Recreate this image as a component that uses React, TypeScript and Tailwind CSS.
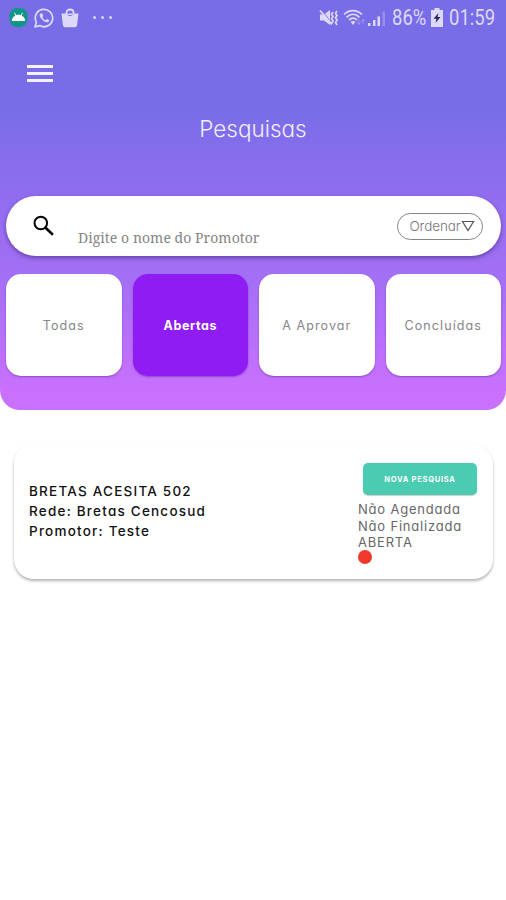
import React from "react";

const rounded = "font-['Inter','Open_Sans',sans-serif] [font-feature-settings:'cv11'] whitespace-nowrap";

function StatusBar() {
  return (
    <div className="flex h-9 items-center pb-px pl-[9px] pr-[9px] text-[#ddd9fb]">
      <svg className="h-[19px] w-[19px]" viewBox="0 0 19 20">
        <rect width="19" height="20" rx="8" fill="#0f9684" />
        <path d="M3 13.200c.2-3.500 2.800-5.700 6.500-5.700s6.300 2.200 6.500 5.700zM5.200 5l2 3.500M13.800 5l-2 3.500" fill="#fff" stroke="#fff" strokeWidth="1" />
      </svg>
      <svg className="ml-[6px] h-5 w-5" viewBox="0 0 20 20" fill="none">
        <path d="M1 19l1.400-4.700A8.700 8.700 0 1 1 5.700 17.600z" stroke="currentColor" strokeWidth="1.700" strokeLinejoin="round" />
        <path d="M6.800 5.200c-1.600 1-1.400 3 .3 5.300 2 2.700 4.800 4.300 6.700 3.700 1-.4 1.500-1.200 1.400-2l-2.300-1.200-1.300 1.300c-1.500-.6-2.500-1.600-3.200-3l.9-1.300-1-2.500z" fill="currentColor" />
      </svg>
      <svg className="ml-[7px] h-5 w-[18px]" viewBox="0 0 18 20">
        <path d="M.5 5.500h17L16 17.500a2 2 0 0 1-2 1.800H4a2 2 0 0 1-2-1.800z" fill="currentColor" />
        <path d="M5.500 7V4.500C5.500 .5 12.500 .5 12.500 4.500V7" fill="none" stroke="currentColor" strokeWidth="1.800" />
        <path d="M6.500 6.500c.5 1.500 4.500 1.500 5 0" fill="none" stroke="#8277dc" strokeWidth="1" />
      </svg>
      <div className="ml-[14px] flex gap-[5px]">
        <span className="size-[3px] rounded-full bg-current" />
        <span className="size-[3px] rounded-full bg-current" />
        <span className="size-[3px] rounded-full bg-current" />
      </div>
      <svg className="ml-auto h-5 w-5" viewBox="0 0 20 20">
        <path d="M1 6.500h4L11 2v15l-6-4.500H1z" fill="currentColor" />
        <path d="M3 2.500l11 14" stroke="#796de6" strokeWidth="1" />
        <path d="M1 2.500l12 14" stroke="currentColor" strokeWidth="1.800" />
        <path d="M14 4l-1.500 2.300L14 8.500l-1.500 2.300L14 13l-1.500 2.500M18 3l-1.500 2.300L18 7.500l-1.500 2.300L18 12l-1.500 2.500L18 17" fill="none" stroke="currentColor" strokeWidth="1.700" />
      </svg>
      <svg className="ml-[4px] h-5 w-[23px]" viewBox="0 0 23 20" fill="none" stroke="currentColor" strokeWidth="1.700">
        <path d="M1 6.500c5-5.300 13-5.300 18 0M3.500 9.300c4-4 9-4 13 0M6 12c2.500-2.500 5.500-2.500 8 0" />
        <path d="M7.500 13.800c1.500-1.200 3.500-1.200 5 0L10 17z" fill="currentColor" stroke="none" />
        <path d="M15.800 11.500v5m-1.800-2l1.800 2 1.800-2M20 16.500v-5m-1.800 2l1.800-2 1.800 2" strokeWidth="1" opacity=".35" />
      </svg>
      <svg className="ml-[2px] h-5 w-[18px]" viewBox="0 0 18 20" fill="currentColor">
        <path d="M0 15h2.500v3H0zM5 12h2.500v6H5zM9.500 8.500H12V18H9.500z" />
        <path d="M14.500 3.500H17V18h-2.500z" opacity=".3" />
      </svg>
      <span className="ml-[6px] w-[35px] origin-left scale-x-[.84] whitespace-nowrap font-[Roboto,sans-serif] text-[22px] leading-5">86%</span>
      <svg className="ml-[4px] h-[19px] w-3" viewBox="0 0 12 19">
        <path d="M3.500 0h5v2H12v17H0V2h3.500z" fill="currentColor" />
        <path d="M7.500 5L2.500 10.700h3L4.500 15l5-6h-3z" fill="#27234d" />
      </svg>
      <span className="ml-[6px] w-[48px] origin-left scale-x-[.84] whitespace-nowrap font-[Roboto,sans-serif] text-[22px] leading-5">01:59</span>
    </div>
  );
}

function SearchBar() {
  return (
    <div className="ml-[6px] mr-[5px] mt-[53px] flex h-[60px] items-center rounded-full bg-white pl-[27px] pr-[18px] shadow-[0_2px_4px_rgba(50,20,100,.5)]">
      <svg className="h-[22px] w-[23px]" viewBox="0 0 23 22" fill="none" stroke="#050505">
        <circle cx="7.800" cy="8" r="6.300" strokeWidth="2" />
        <path d="M12.300 12.500l7.600 7.300" strokeWidth="2.600" />
      </svg>
      <span className="ml-[22px] mt-[24px] whitespace-nowrap font-['Droid_Serif','Noto_Serif','DejaVu_Serif',serif] text-[14px] leading-5 tracking-[.05px] text-[#858585]">Digite o nome do Promotor</span>
      <button className="ml-auto flex h-[27px] w-[86px] items-center rounded-full border border-[#858585] pl-[11px] text-[#777]">
        <span className={`${rounded} w-[52px] text-[13.500px] font-light tracking-[-.1px]`}>Ordenar</span>
        <svg className="h-3 w-[14px]" viewBox="0 0 14 12" fill="none" stroke="#555" strokeWidth="1.200">
          <path d="M1.500 1.500h11L7 10.500z" />
        </svg>
      </button>
    </div>
  );
}

const tabs = [
  { label: "Todas", active: false },
  { label: "Abertas", active: true },
  { label: "A Aprovar", active: false },
  { label: "Concluídas", active: false },
];

export default function App() {
  return (
    <main className="h-[900px] w-full overflow-hidden bg-white">
      <header className="h-[410px] rounded-b-[20px] bg-[linear-gradient(180deg,#796de7_0,#796de7_110px,#8f6def_190px,#a36ff4_275px,#c970ff_390px,#c970ff_410px)]">
        <StatusBar />
        <button className="ml-[27px] mt-[29px] flex w-[26px] flex-col gap-[4px]" aria-label="Menu">
          <span className="h-[3px] w-full bg-[#f3f1ff]" />
          <span className="h-[3px] w-full bg-[#f3f1ff]" />
          <span className="h-[3px] w-full bg-[#f3f1ff]" />
        </button>
        <h1 className={`${rounded} mt-[32px] text-center text-[22.500px] font-light leading-[29px] text-[#f2efff]`}>Pesquisas</h1>
        <SearchBar />
        <nav className="ml-[6px] mr-[5px] mt-[18px] grid grid-cols-4 gap-[11px]">
          {tabs.map((tab) => (
            <button
              key={tab.label}
              className={`${rounded} flex h-[102px] items-center justify-center rounded-[15px] pt-[2px] text-[12.500px] shadow-[0_1px_2px_rgba(60,20,110,.4)] ${tab.active ? "bg-[#8f1cf3] font-bold tracking-[.6px] text-white" : "bg-white font-normal tracking-[1.100px] text-[#858585]"}`}
            >
              {tab.label}
            </button>
          ))}
        </nav>
      </header>
      <section className="ml-[14px] mr-[13px] mt-[34px] flex h-[135px] justify-between rounded-[20px] bg-white pl-[15px] pr-[16px] shadow-[0_2px_3px_rgba(0,0,0,.3)]">
        <div className={`${rounded} mt-[37px] text-[13.500px] font-medium leading-[20px] tracking-[1.220px] text-[#111]`}>
          <p>BRETAS ACESITA 502</p>
          <p>Rede: Bretas Cencosud</p>
          <p>Promotor: Teste</p>
        </div>
        <div className="mt-[19px] w-[119px]">
          <button className={`${rounded} ml-[5px] flex h-[32px] w-[114px] items-center justify-center rounded-[5px] bg-[#4bcbb1] pt-px text-[7.500px] font-bold tracking-[.75px] text-white shadow-[0_1px_1px_rgba(0,0,0,.2)]`}>NOVA PESQUISA</button>
          <div className={`${rounded} mt-[6px] text-[13px] font-normal leading-[16.700px] tracking-[.8px] text-[#666]`}>
            <p>Não Agendada</p>
            <p>Não Finalizada</p>
            <p>ABERTA</p>
          </div>
          <div className="-mt-px size-[14px] rounded-full bg-[#f1382b]" />
        </div>
      </section>
    </main>
  );
}
